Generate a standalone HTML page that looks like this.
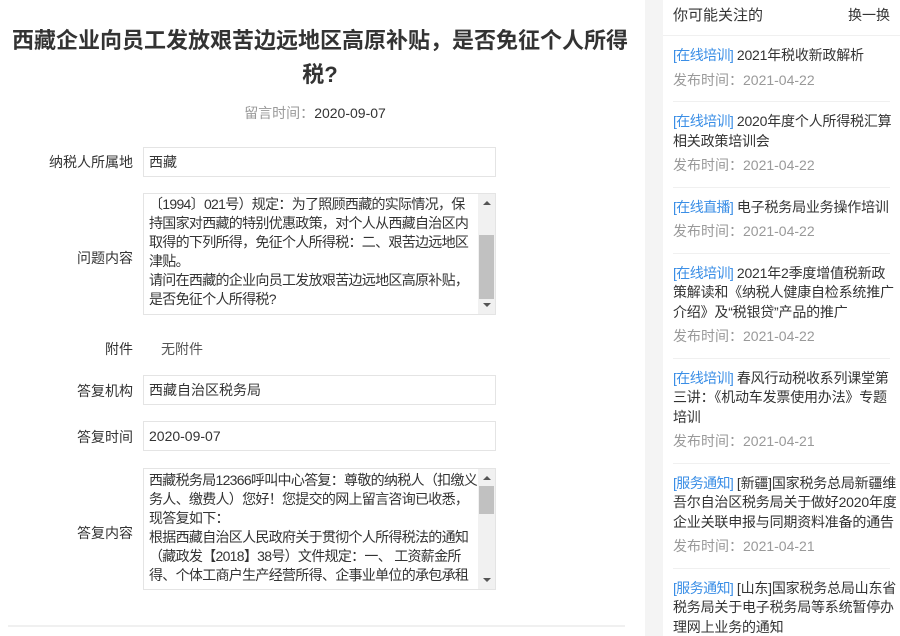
<!DOCTYPE html>
<html><head><meta charset="utf-8"><style>
*{margin:0;padding:0;box-sizing:border-box}
body{width:900px;height:636px;overflow:hidden;background:#fff;font-family:"Liberation Sans","Noto Sans CJK SC",sans-serif;color:#333;position:relative}
.title{position:absolute;left:0;top:24px;width:640px;text-align:center;font-size:22px;font-weight:bold;line-height:34px;color:#333}
.meta{position:absolute;left:0;top:103px;width:630px;text-align:center;font-size:14px;color:#999}
.meta b{font-weight:normal;color:#333}
.lab{position:absolute;right:767px;font-size:14px;color:#333;text-align:right;white-space:nowrap}
.inp{position:absolute;left:143px;width:353px;border:1px solid #e4e4e4;font-size:14px;color:#333;padding-left:5px}
.ta{position:absolute;left:143px;width:353px;height:122px;border:1px solid #e4e4e4;font-size:14px;line-height:19px;padding:0 0 0 5px;overflow:hidden;color:#333;white-space:nowrap;letter-spacing:-0.7px}
.sb{position:absolute;right:0;top:0;width:17px;height:100%;background:#f1f1f1}
.sb .th{position:absolute;left:1px;width:15px;background:#c1c1c1}
.sb .up,.sb .dn{position:absolute;left:5px;width:0;height:0;border-left:4px solid transparent;border-right:4px solid transparent}
.sb .up{top:7px;border-bottom:4px solid #555}
.sb .dn{bottom:7px;border-top:4px solid #555}
.gs{position:absolute;left:645px;top:0;width:18px;height:636px;background:#f4f4f4}
.rp{position:absolute;left:663px;top:0;width:237px;height:636px;background:#fff;overflow:hidden}
.hd{height:36px;border-bottom:1px solid #f0f0f0;position:relative;font-size:15px;color:#333}
.hd span{position:absolute;top:5px}
.it{margin:0 10px;padding:10px 0 11px;border-bottom:1px solid #f0f0f0;font-size:14px;line-height:19.5px;color:#333;white-space:nowrap;letter-spacing:-0.2px}
.it i{font-style:normal;color:#3a8ee6;letter-spacing:-0.6px}
.it .d{margin-top:5px;color:#999;letter-spacing:0}
</style></head><body>
<div class="title">西藏企业向员工发放艰苦边远地区高原补贴，是否免征个人所得<br>税?</div>
<div class="meta">留言时间：<b>2020-09-07</b></div>

<div class="lab" style="top:152px">纳税人所属地</div>
<div class="inp" style="top:147px;height:30px;line-height:28px">西藏</div>

<div class="lab" style="top:248px">问题内容</div>
<div class="ta" style="top:193px"><div style="margin-top:1px">〔1994〕021号）规定：为了照顾西藏的实际情况，保<br>持国家对西藏的特别优惠政策，对个人从西藏自治区内<br>取得的下列所得，免征个人所得税：二、艰苦边远地区<br>津贴。<br>请问在西藏的企业向员工发放艰苦边远地区高原补贴，<br>是否免征个人所得税?</div>
<div class="sb"><div class="up"></div><div class="th" style="top:41px;height:64px"></div><div class="dn"></div></div></div>

<div class="lab" style="top:339px">附件</div>
<div style="position:absolute;left:161px;top:339px;font-size:14px;color:#555">无附件</div>

<div class="lab" style="top:381px">答复机构</div>
<div class="inp" style="top:375px;height:30px;line-height:28px">西藏自治区税务局</div>

<div class="lab" style="top:427px">答复时间</div>
<div class="inp" style="top:421px;height:30px;line-height:28px">2020-09-07</div>

<div class="lab" style="top:523px">答复内容</div>
<div class="ta" style="top:468px"><div style="margin-top:2px">西藏税务局12366呼叫中心答复：尊敬的纳税人（扣缴义<br>务人、缴费人）您好！您提交的网上留言咨询已收悉，<br>现答复如下：<br>根据西藏自治区人民政府关于贯彻个人所得税法的通知<br>（藏政发【2018】38号）文件规定：一、 工资薪金所<br>得、个体工商户生产经营所得、企事业单位的承包承租</div>
<div class="sb"><div class="up"></div><div class="th" style="top:17px;height:28px"></div><div class="dn"></div></div></div>

<div style="position:absolute;left:8px;top:625px;width:617px;height:2px;background:#f0f0f0"></div>

<div class="gs"></div>
<div class="rp">
<div class="hd"><span style="left:10px;top:4px">你可能关注的</span><span style="right:10px;font-size:14px">换一换</span></div>
<div class="it"><i>[在线培训]</i> 2021年税收新政解析<div class="d">发布时间：2021-04-22</div></div>
<div class="it"><i>[在线培训]</i> 2020年度个人所得税汇算<br>相关政策培训会<div class="d">发布时间：2021-04-22</div></div>
<div class="it"><i>[在线直播]</i> 电子税务局业务操作培训<div class="d">发布时间：2021-04-22</div></div>
<div class="it"><i>[在线培训]</i> 2021年2季度增值税新政<br>策解读和《纳税人健康自检系统推广<br>介绍》及“税银贷”产品的推广<div class="d">发布时间：2021-04-22</div></div>
<div class="it"><i>[在线培训]</i> 春风行动税收系列课堂第<br>三讲：《机动车发票使用办法》专题<br>培训<div class="d">发布时间：2021-04-21</div></div>
<div class="it"><i>[服务通知]</i> [新疆]国家税务总局新疆维<br>吾尔自治区税务局关于做好2020年度<br>企业关联申报与同期资料准备的通告<div class="d">发布时间：2021-04-21</div></div>
<div class="it"><i>[服务通知]</i> [山东]国家税务总局山东省<br>税务局关于电子税务局等系统暂停办<br>理网上业务的通知<div class="d">发布时间：2021-04-21</div></div>
</div>
</body></html>
